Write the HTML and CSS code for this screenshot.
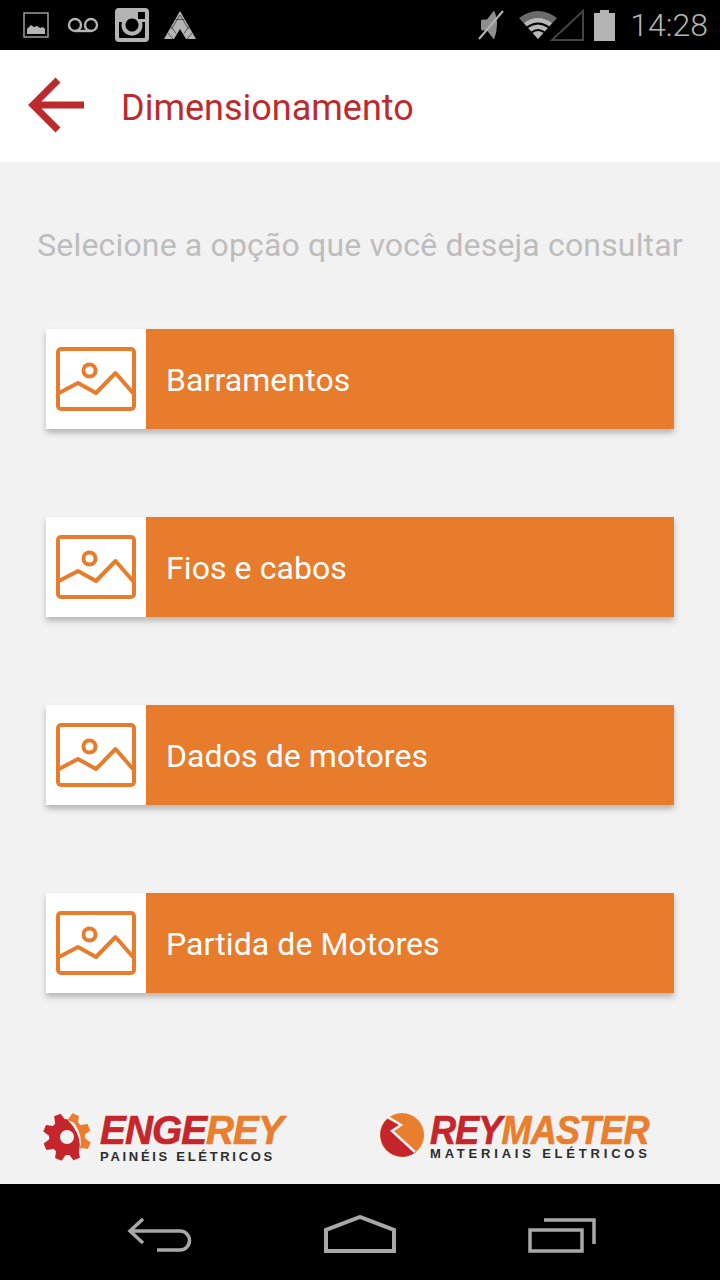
FILE: index.html
```html
<!DOCTYPE html>
<html lang="pt">
<head>
<meta charset="utf-8">
<title>Dimensionamento</title>
<link rel="stylesheet" href="styles.css">
</head>
<body>
<div class="screen">
  <div class="status">
    <div class="status-left">
      <svg class="st-pic" viewBox="0 0 26 26"><rect x="1" y="1" width="24" height="24" fill="none" stroke="#a8a8a8" stroke-width="1.4"/><path d="M4 22v-5l4-4 3 2 3-1 3 2 3-1 2 2v5z" fill="#b4b4b4"/></svg>
      <svg class="st-vm" viewBox="0 0 32 16"><path d="M8 14h16" stroke="#b4b4b4" stroke-width="2.4"/><circle cx="8" cy="8" r="6" fill="none" stroke="#b4b4b4" stroke-width="2.4"/><circle cx="24" cy="8" r="6" fill="none" stroke="#b4b4b4" stroke-width="2.4"/></svg>
      <svg class="st-insta" viewBox="0 0 34 34"><path fill-rule="evenodd" fill="#b4b4b4" d="M4 0h26a4 4 0 0 1 4 4v26a4 4 0 0 1-4 4H4a4 4 0 0 1-4-4V4a4 4 0 0 1 4-4zM23 4v7h7V4zM4 14v15a1 1 0 0 0 1 1h24a1 1 0 0 0 1-1V14h-3a10.500 10.500 0 1 1-20 0zM17 10.500a6.500 6.500 0 1 0 .01 0z"/></svg>
      <svg class="st-tri" viewBox="0 0 32 28"><path fill="#b4b4b4" d="M16 0l16 28H22l-6-10-6 10H0z"/><path d="M11.300 8.500h9.400M7 15.500l5 7M25 15.500l-5 7M16 4l-8.500 14M16 4l8.500 14M4 22l5 6M28 22l-5 6" fill="none" stroke="#3c3c3c" stroke-width=".8"/></svg>
    </div>
    <div class="status-right">
      <svg class="st-mute" viewBox="0 0 26 32"><path fill="#8e8e8e" d="M3 12q0-1.500 2-1.500h4l7-9q3 6 3 14t-3 15l-7-9H5q-2 0-2-1.500z"/><path d="M1 30L25 2" stroke="#b4b4b4" stroke-width="2"/></svg>
      <svg class="st-wifi" viewBox="0 0 38 28"><path fill="#6a6a6a" d="M19 28L0 7q19-14 38 0z"/><path fill="#b8b8b8" d="M19 28L5 12q14-10 28 0z"/><path fill="#000" d="M7.500 15.500q11.500-8 23 0l-1.500 1.500q-10-7-20 0zM12 20.500q7-5 14 0l-1.500 1.600q-5.500-4-11 0z"/></svg>
      <svg class="st-signal" viewBox="0 0 35 32"><path d="M3 31L34 2v29z" fill="none" stroke="#444" stroke-width="2"/></svg>
      <svg class="st-batt" viewBox="0 0 21 31"><path fill="#b4b4b4" d="M6 0h9v3h6v28H0V3h6z"/></svg>
      <span class="clock">14:28</span>
    </div>
  </div>

  <header class="topbar">
    <svg class="back" viewBox="0 0 58 58"><path d="M31 3L6 28l25 25M6 28h51" fill="none" stroke="#bd2a2e" stroke-width="7"/></svg>
    <h1 class="title">Dimensionamento</h1>
  </header>

  <main class="content">
    <p class="prompt">Selecione a opção que você deseja consultar</p>
    <nav class="menu">
      <a class="item"><span class="thumb"><svg class="pic" viewBox="0 0 80 64"><use href="#pic"/></svg></span><span class="label">Barramentos</span></a>
      <a class="item"><span class="thumb"><svg class="pic" viewBox="0 0 80 64"><use href="#pic"/></svg></span><span class="label">Fios e cabos</span></a>
      <a class="item"><span class="thumb"><svg class="pic" viewBox="0 0 80 64"><use href="#pic"/></svg></span><span class="label">Dados de motores</span></a>
      <a class="item"><span class="thumb"><svg class="pic" viewBox="0 0 80 64"><use href="#pic"/></svg></span><span class="label">Partida de Motores</span></a>
    </nav>
    <footer class="brands">
      <div class="brand engerey">
        <svg class="gear" viewBox="0 0 50 50">
          <g fill="#c4262c">
            <path d="M21 1h7l2 8H19z" transform="rotate(157.500 25 25)"/>
            <path d="M21 1h7l2 8H19z" transform="rotate(202.500 25 25)"/>
            <path d="M21 1h7l2 8H19z" transform="rotate(247.500 25 25)"/>
            <path d="M21 1h7l2 8H19z" transform="rotate(292.500 25 25)"/>
            <path d="M21 1h7l2 8H19z" transform="rotate(337.500 25 25)"/>
            <path fill-rule="evenodd" d="M25 7a18 18 0 1 0 12 31.500Q41 24 25 7zM25 18a7 7 0 1 1-.01 0z"/>
          </g>
          <g fill="#e87e2e">
            <path d="M21 1h7l2 8H19z" transform="rotate(22.500 25 25)"/>
            <path d="M21 1h7l2 8H19z" transform="rotate(67.500 25 25)"/>
            <path d="M21 1h7l2 8H19z" transform="rotate(112.500 25 25)"/>
            <path d="M29 7a18.500 18.500 0 0 1 11 28l-2 2Q42 22 29 7z"/>
          </g>
        </svg>
        <div class="brand-text">
          <div class="brand-name"><span class="red">ENGE</span><span class="orange">REY</span></div>
          <div class="brand-sub">PAINÉIS ELÉTRICOS</div>
        </div>
      </div>
      <div class="brand reymaster">
        <svg class="bolt" viewBox="0 0 44 44"><circle cx="22" cy="22" r="22" fill="#e87e2e"/><path fill="#c4262c" d="M7 6l13 6-8 6 24 21a22 22 0 0 1-29-33z"/><path d="M8 4l13 8-9 6 23 21" fill="none" stroke="#f2f2f2" stroke-width="2.500"/></svg>
        <div class="brand-text">
          <div class="brand-name"><span class="red">REY</span><span class="orange">MASTER</span></div>
          <div class="brand-sub">MATERIAIS ELÉTRICOS</div>
        </div>
      </div>
    </footer>
  </main>

  <div class="navbar">
    <svg class="nav-back" viewBox="0 0 66 34"><path d="M16 1L3 13l13 12M3 13h50a9.500 9.500 0 0 1 0 19H30" fill="none" stroke="#a8a8a8" stroke-width="3.500"/></svg>
    <svg class="nav-home" viewBox="0 0 72 38"><path d="M2 36V15L36 2l34 13v21z" fill="none" stroke="#a8a8a8" stroke-width="4"/></svg>
    <svg class="nav-recent" viewBox="0 0 68 35"><path d="M2 12h52v21H2zM16 2h50v24" fill="none" stroke="#a8a8a8" stroke-width="3.500"/></svg>
  </div>
</div>

<svg class="defs" aria-hidden="true"><defs>
  <g id="pic" fill="none" stroke="#e87c2d" stroke-width="4" stroke-linejoin="round" stroke-linecap="round">
    <rect x="2" y="2" width="76" height="60" rx="3"/>
    <circle cx="33.500" cy="23.500" r="6"/>
    <path d="M3 46l19-10 18 10 19.500-20 17.500 20"/>
  </g>
</defs></svg>
</body>
</html>
```
FILE: styles.css
```css
* { box-sizing: border-box; }
html, body { margin: 0; padding: 0; }
body { font-family: Roboto, "Liberation Sans", sans-serif; background: #000; }
.defs { display: none; }
.screen { width: 720px; height: 1280px; display: flex; flex-direction: column; }

/* system status bar */
.status { height: 50px; background: #000; display: flex; justify-content: space-between; align-items: center; padding: 0 12px 0 23px; flex: none; }
.status-left, .status-right { display: flex; align-items: center; }
.st-pic { width: 26px; height: 26px; margin-right: 18px; }
.st-vm { width: 32px; height: 16px; margin-right: 15px; }
.st-insta { width: 34px; height: 34px; margin-right: 15px; margin-left: 1px; }
.st-tri { width: 32px; height: 28px; }
.st-mute { width: 26px; height: 32px; margin-right: 15px; }
.st-wifi { width: 38px; height: 28px; }
.st-signal { width: 35px; height: 32px; margin-left: -8px; margin-right: 10px; }
.st-batt { width: 21px; height: 31px; margin-right: 15px; }
.clock { font-size: 32px; color: #b4b4b4; font-weight: 300; }

/* app bar */
.topbar { height: 112px; background: #fff; display: flex; align-items: center; padding-left: 27px; flex: none; }
.back { width: 58px; height: 58px; margin-right: 36px; }
.title { margin: 4px 0 0; font-size: 36px; font-weight: 400; color: #bd2a2e; }

/* body */
.content { flex: 1; background: #f2f2f2; display: flex; flex-direction: column; align-items: center; }
.prompt { margin: 64px 0 0; height: 38px; line-height: 38px; font-size: 32px; letter-spacing: .16px; color: #bdbdbd; white-space: nowrap; }
.menu { margin-top: 65px; display: flex; flex-direction: column; gap: 88px; }
.item { width: 628px; height: 100px; display: flex; background: #e87c2d; box-shadow: 0 4px 6px rgba(0,0,0,.25); }
.thumb { width: 100px; background: #fff; display: flex; align-items: center; justify-content: center; }
.pic { width: 80px; height: 64px; }
.label { color: #fff; font-size: 32px; line-height: 102px; padding-left: 20px; letter-spacing: .08px; }

/* partner logos */
.brands { margin-top: auto; width: 100%; height: 92px; display: flex; padding: 22px 0 0 42px; font-family: "Liberation Sans", Arial, sans-serif; }
.brand { display: flex; align-items: flex-start; }
.engerey { width: 337px; }
.gear { width: 50px; height: 50px; margin: -2px 8px 0 0; }
.bolt { width: 44px; height: 44px; margin: -1px 6px 0 1px; }
.brand-name { font-size: 41px; font-weight: 700; font-style: italic; line-height: 32px; height: 34px; letter-spacing: -1px; transform: scaleX(.945); transform-origin: left; white-space: nowrap; -webkit-text-stroke: .7px currentColor; }
.reymaster .brand-name { transform: scaleX(.88); }
.brand-sub { font-size: 13px; font-weight: 700; color: #2c2c2c; line-height: 11px; letter-spacing: 2.700px; margin-top: 3px; white-space: nowrap; }
.reymaster .brand-sub { letter-spacing: 3.800px; margin-top: 0; }
.red { color: #c4262c; }
.orange { color: #e87e2e; }

/* system navigation */
.navbar { height: 96px; background: #000; flex: none; display: flex; align-items: flex-start; padding: 34px 0 0 127px; }
.nav-back { width: 66px; height: 34px; margin-right: 131px; }
.nav-home { width: 72px; height: 38px; margin-top: -3px; margin-right: 132px; }
.nav-recent { width: 68px; height: 35px; }
```
